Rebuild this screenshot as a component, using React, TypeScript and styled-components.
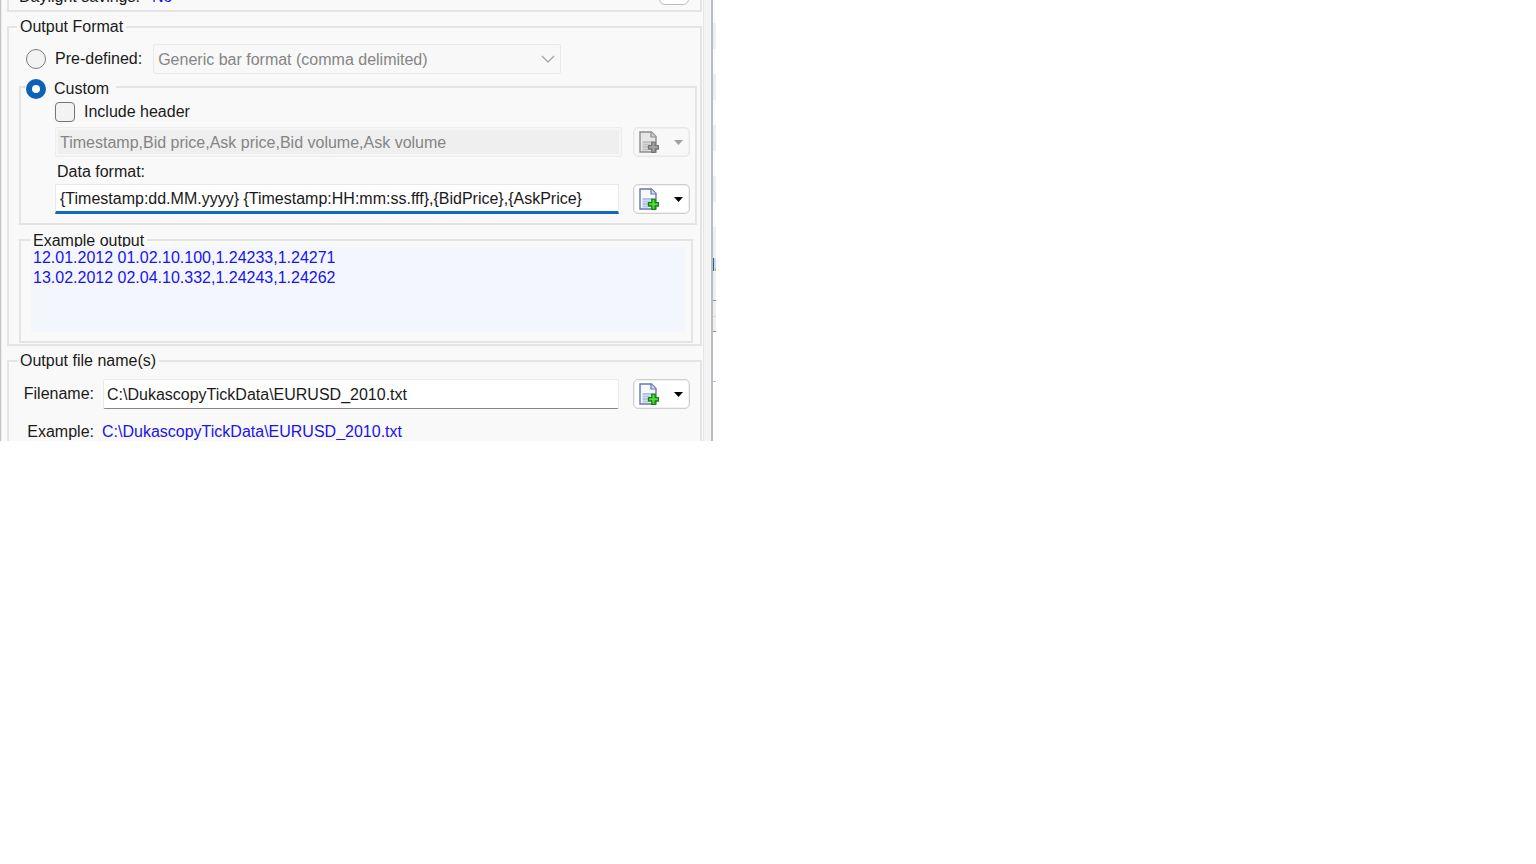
import React from "react";
import styled, { createGlobalStyle } from "styled-components";

const GlobalStyle = createGlobalStyle`
  *, *::before, *::after { box-sizing: border-box; }
  body {
    margin: 0;
    background: #fff;
    color: #1a1a1a;
    font: 16px/20px "Liberation Sans", Arial, sans-serif;
  }
  input, select, button, textarea { font: inherit; color: inherit; margin: 0; }
`;

const LINE = "#e4e4e4";
const BLUE = "#1a12f0";

const Page = styled.div`
  display: grid;
  grid-template-columns: minmax(0, 713fr) 3fr 820fr;
`;

const Dialog = styled.form`
  display: flex;
  flex-direction: column;
  background: #f9f9f9;
  border-left: 1px solid #c4c4c4;
  border-right: 2px solid #b9bcc0;
  overflow: hidden;
`;

const Body = styled.div`
  display: flex;
  flex-direction: column;
  margin-right: 7px;
  padding: 0 1px 0 6px;
  border-right: 1px solid #e6e6e6;
  box-shadow: 7px 0 0 #f3f3f3, inset 1px 0 0 #ececec;
`;

const CutOffGroup = styled.section`
  display: flex;
  align-items: flex-end;
  gap: 12px;
  height: 12px;
  margin-bottom: 5px;
  padding: 0 11px 3px 10px;
  border: solid ${LINE};
  border-width: 0 2px 2px;
  overflow: hidden;
`;

const CutOffButton = styled.button`
  width: 30px;
  height: 20px;
  margin-left: auto;
  margin-bottom: 2px;
  padding: 0 5px;
  line-height: 18px;
  background: #fff;
  border: 1px solid #bdbdbd;
  border-radius: 6px;
  color: #6a6a6a;
`;

const Group = styled.fieldset`
  min-width: 0;
  margin: 0;
  padding: 0 3px 1px 8px;
  border: 2px solid ${LINE};
`;

const Legend = styled.legend`
  padding: 0 3px;
`;

const FileGroup = styled(Group)`
  margin-top: 5px;
  border-bottom: 0;
`;

const CustomGroup = styled(Group)`
  margin: 1px 0 0 2px;
  padding: 0 5px 9px 5px;
`;

const CustomLegend = styled.legend`
  display: flex;
  align-items: center;
  gap: 8px;
  padding: 4px 7px 0 0;
`;

const Row = styled.div<{ $gap?: number; $top?: number; $indent?: number }>`
  display: flex;
  align-items: center;
  gap: ${(p) => p.$gap ?? 0}px;
  margin-top: ${(p) => p.$top ?? 0}px;
  padding-left: ${(p) => p.$indent ?? 0}px;
`;

const Radio = styled.input`
  appearance: none;
  flex: none;
  width: 20px;
  height: 20px;
  border: 1px solid #7c7c7c;
  border-radius: 50%;
  background: #f3f3f3;
  &:checked {
    border: 6px solid #0d62b5;
    background: #fff;
  }
`;

const Checkbox = styled.input`
  appearance: none;
  flex: none;
  width: 20px;
  height: 20px;
  border: 1px solid #757575;
  border-radius: 4px;
  background: #f3f3f3;
`;

const SelectBox = styled.div`
  position: relative;
  flex: 0 1 408px;
  min-width: 0;
  margin-left: 2px;
  svg {
    position: absolute;
    right: 6px;
    top: 10px;
    pointer-events: none;
  }
`;

const Select = styled.select`
  appearance: none;
  display: block;
  width: 100%;
  height: 30px;
  padding: 2px 24px 0 4px;
  border: 1px solid #e9e9e9;
  border-radius: 2px;
  background: #f8f8f8;
  &:disabled { color: #858585; opacity: 1; }
`;

const TextField = styled.input`
  flex: 1;
  min-width: 0;
  height: 30px;
  padding: 1px 3px 0;
  border: 1px solid #e9e9e9;
  border-bottom: 1px solid #868686;
  border-radius: 2px;
  background: #fff;
  outline: none;
  &:disabled {
    padding: 1px 4px 0;
    border: 1px solid #ededed;
    background: #efefef;
    box-shadow: inset 0 0 0 2px #f6f6f6;
    color: #858585;
  }
`;

const ActiveField = styled(TextField)`
  padding: 2px 4px 0;
  border-bottom: 3px solid #1268ba;
  border-radius: 0;
`;

const InsertButton = styled.button`
  display: flex;
  align-items: center;
  justify-content: space-between;
  flex: none;
  width: 57px;
  height: 30px;
  padding: 0 6px 0 5px;
  border: 1px solid #cfcfcf;
  border-radius: 5px;
  background: #fff;
  box-shadow: inset 0 0 0 1px #f0f0f0;
  &:disabled {
    border-color: #e8e8e8;
    background: #f8f8f8;
  }
`;

const DataLabel = styled.label`
  display: block;
  margin-top: 5px;
  padding-left: 31px;
`;

const ExampleGroup = styled(Group)`
  margin: 7px 4px 0 2px;
  padding: 0 6px 9px 10px;
`;

const ExampleLegend = styled.legend`
  height: 15px;
  line-height: 18px;
  padding: 0 3px 0 2px;
  overflow: hidden;
`;

const Sample = styled.output`
  display: block;
  height: 85px;
  padding: 1px 2px;
  white-space: pre-line;
  background: #f3f7fd;
  color: ${BLUE};
`;

const FieldLabel = styled.label`
  flex: none;
  width: 77px;
  text-align: right;
`;

const FileControls = styled.div`
  display: flex;
  align-items: center;
  flex: 1;
  min-width: 0;
  gap: 14px;
  padding: 0 7px 0 9px;
`;

const LastRow = styled(Row)`
  height: 18px;
  align-items: flex-start;
  overflow: hidden;
`;

const Blue = styled.span`
  color: ${BLUE};
`;

const Backdrop = styled.aside`
  display: flex;
  flex-direction: column;
`;

const Band = styled.div<{ $h: number; $bg: string; $line?: string }>`
  flex: none;
  height: ${(p) => p.$h}px;
  background: ${(p) => p.$bg};
  border-bottom: ${(p) => (p.$line ? `1px solid ${p.$line}` : "0")};
`;

const Mark = styled.div`
  display: flex;
  justify-content: flex-end;
  align-items: flex-end;
  height: 13px;
  background: #c3e2ee;
  border-left: 1px solid #3b568c;
  &::after {
    content: "";
    width: 1px;
    height: 3px;
    background: #e0b460;
  }
`;

function PageIcon({ disabled }: { disabled?: boolean }) {
  const edge = disabled ? "#8c8c8c" : "#6478ad";
  const paper = disabled ? "#e6e6e6" : "#f5f8ff";
  const text = disabled ? "#c4c4c4" : "#b4c3e2";
  return (
    <svg width="20" height="22" viewBox="0 0 20 22" aria-hidden="true">
      <path d="M1 1h11.500L17 5.500V21H1z" fill={paper} stroke={edge} strokeWidth="1.4" />
      <path d="M12 1v5h5" fill={disabled ? "#d0d0d0" : "#cfdaf2"} stroke={edge} strokeWidth="1.2" />
      <path d="M3.500 11h10M3.500 13.500h8M3.500 16h6M3.500 18.500h6" stroke={text} strokeWidth="1.8" />
      <path
        d="M12.800 11.200h3.400v3.400h3.300V18h-3.300v3.400h-3.400V18H9.500v-3.400h3.300z"
        fill={disabled ? "#a6a6a6" : "#4fdc38"}
        stroke={disabled ? "#747474" : "#14800f"}
        strokeWidth="1.3"
        strokeLinejoin="round"
      />
    </svg>
  );
}

function InsertMenuButton({ label, disabled }: { label: string; disabled?: boolean }) {
  return (
    <InsertButton type="button" aria-label={label} disabled={disabled}>
      <PageIcon disabled={disabled} />
      <svg width="9" height="5" viewBox="0 0 9 5" aria-hidden="true">
        <path d="M0 0h9L4.500 5z" fill={disabled ? "#a2a2a2" : "#000"} />
      </svg>
    </InsertButton>
  );
}

export default function App() {
  return (
    <>
      <GlobalStyle />
      <Page>
        <Dialog>
          <Body>
            <CutOffGroup>
              <span>Daylight savings:</span>
              <Blue>No</Blue>
              <CutOffButton type="button">…</CutOffButton>
            </CutOffGroup>

            <Group>
              <Legend>Output Format</Legend>
              <Row $top={7} $indent={9} $gap={9}>
                <Radio type="radio" name="format" id="predefined" />
                <label htmlFor="predefined">Pre-defined:</label>
                <SelectBox>
                  <Select disabled aria-label="Pre-defined format">
                    <option>Generic bar format (comma delimited)</option>
                  </Select>
                  <svg width="14" height="10" viewBox="0 0 14 10" aria-hidden="true">
                    <path d="M1 2l6 6 6-6" fill="none" stroke="#a8a8a8" strokeWidth="1.4" />
                  </svg>
                </SelectBox>
              </Row>

              <CustomGroup>
                <CustomLegend>
                  <Radio type="radio" name="format" id="custom" defaultChecked />
                  <label htmlFor="custom">Custom</label>
                </CustomLegend>
                <Row $top={3} $indent={29} $gap={9}>
                  <Checkbox type="checkbox" id="header" />
                  <label htmlFor="header">Include header</label>
                </Row>
                <Row $top={5} $indent={29} $gap={11}>
                  <TextField
                    disabled
                    aria-label="Header"
                    defaultValue="Timestamp,Bid price,Ask price,Bid volume,Ask volume"
                  />
                  <InsertMenuButton label="Insert header field" disabled />
                </Row>
                <DataLabel htmlFor="data">Data format:</DataLabel>
                <Row $top={2} $indent={29} $gap={14}>
                  <ActiveField
                    id="data"
                    defaultValue="{Timestamp:dd.MM.yyyy} {Timestamp:HH:mm:ss.fff},{BidPrice},{AskPrice}"
                  />
                  <InsertMenuButton label="Insert data field" />
                </Row>
              </CustomGroup>

              <ExampleGroup>
                <ExampleLegend>Example output</ExampleLegend>
                <Sample>
                  {"12.01.2012 01.02.10.100,1.24233,1.24271\n13.02.2012 02.04.10.332,1.24243,1.24262"}
                </Sample>
              </ExampleGroup>
            </Group>

            <FileGroup>
              <Legend>Output file name(s)</Legend>
              <Row $top={8}>
                <FieldLabel htmlFor="file">Filename:</FieldLabel>
                <FileControls>
                  <TextField id="file" defaultValue="C:\DukascopyTickData\EURUSD_2010.txt" />
                  <InsertMenuButton label="Insert file name field" />
                </FileControls>
              </Row>
              <LastRow $top={13} $gap={8}>
                <FieldLabel as="span">Example:</FieldLabel>
                <Blue>C:\DukascopyTickData\EURUSD_2010.txt</Blue>
              </LastRow>
            </FileGroup>
          </Body>
        </Dialog>

        <Backdrop aria-hidden="true">
          {[0, 1, 2, 3].map((i) => (
            <React.Fragment key={i}>
              <Band $h={i === 0 ? 23 : 25} $bg="#fafbfc" />
              <Band $h={26} $bg="#e9f0f8" />
            </React.Fragment>
          ))}
          <Band $h={25} $bg="#fafbfc" />
          <Band $h={31} $bg="#e9f0f8" />
          <Mark />
          <Band $h={30} $bg="#e9f0f8" $line="#8b8b8b" />
          <Band $h={16} $bg="#efefef" $line="#d8d8d8" />
          <Band $h={15} $bg="#efefef" $line="#8b8b8b" />
          <Band $h={50} $bg="#fff" $line="#b4c3d3" />
        </Backdrop>
      </Page>
    </>
  );
}
